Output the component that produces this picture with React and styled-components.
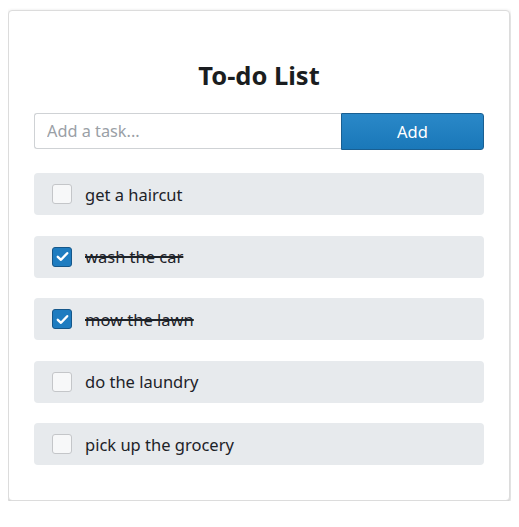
import React, { useState } from "react";
import styled, { createGlobalStyle } from "styled-components";

const Global = createGlobalStyle`
  body {
    margin: 8px;
    background: #fff;
    font-family: "Segoe UI", "Noto Sans", "Open Sans", sans-serif;
    color: #1d2125;
  }
  * { box-sizing: border-box; }
`;

const Card = styled.div`
  width: 502px;
  margin-top: 2px;
  border: 1px solid #dcdcdc;
  border-radius: 4px;
  box-shadow: 0 2px 4px rgba(0, 0, 0, 0.28);
  padding: 47px 25px 35px;
  background: #fff;
`;

const Title = styled.h1`
  margin: 0 0 21px;
  text-align: center;
  font-size: 25.5px;
  line-height: 34px;
  font-weight: 700;
  color: #1a1d20;
`;

const Form = styled.form`
  display: flex;
  height: 37px;
  margin-bottom: 23px;
`;

const Input = styled.input`
  flex: 1;
  min-width: 0;
  height: 36px;
  border: 1px solid #cfd2d5;
  border-right: none;
  border-radius: 3px 0 0 3px;
  padding: 0 12px;
  font: inherit;
  font-size: 16.3px;
  color: #333;
  outline: none;
  &::placeholder { color: #9aa0a6; }
`;

const AddButton = styled.button`
  width: 143px;
  height: 37px;
  border: 1px solid #195f92;
  border-radius: 0 3px 3px 0;
  background: linear-gradient(#2a88c8, #1a78b9);
  color: #fff;
  font: inherit;
  font-size: 16.5px;
  cursor: pointer;
`;

const List = styled.ul`
  list-style: none;
  margin: 0;
  padding: 0;
  display: flex;
  flex-direction: column;
  gap: 20.5px;
`;

const Item = styled.li`
  display: flex;
  align-items: center;
  gap: 13px;
  height: 42px;
  padding: 0 18px;
  background: #e7eaed;
  border-radius: 4px;
`;

const Box = styled.span`
  width: 20px;
  height: 20px;
  flex: none;
  border-radius: 3px;
  display: flex;
  align-items: center;
  justify-content: center;
  border: 1px solid ${p => (p.$checked ? "#15578a" : "#c4c6c9")};
  background: ${p => (p.$checked ? "#1e7cc0" : "#f7f8f9")};
  cursor: pointer;
`;

const Label = styled.span`
  font-size: 16.5px;
  color: #1d2228;
  text-decoration: ${p => (p.$done ? "line-through" : "none")};
  text-decoration-thickness: 1.5px;
`;

const initial = [
  { text: "get a haircut", done: false },
  { text: "wash the car", done: true },
  { text: "mow the lawn", done: true },
  { text: "do the laundry", done: false },
  { text: "pick up the grocery", done: false },
];

export default function App() {
  const [items, setItems] = useState(initial);
  const toggle = i =>
    setItems(items.map((it, j) => (j === i ? { ...it, done: !it.done } : it)));
  return (
    <>
      <Global />
      <Card>
        <Title>To-do List</Title>
        <Form onSubmit={e => e.preventDefault()}>
          <Input placeholder="Add a task..." />
          <AddButton type="submit">Add</AddButton>
        </Form>
        <List>
          {items.map((it, i) => (
            <Item key={i}>
              <Box $checked={it.done} onClick={() => toggle(i)}>
                {it.done && (
                  <svg width="13" height="11" viewBox="0 0 13 11">
                    <path d="M1.8 5.8 L5 8.8 L11.2 2.2" fill="none" stroke="#fff" strokeWidth="2.4" strokeLinecap="round" strokeLinejoin="round" />
                  </svg>
                )}
              </Box>
              <Label $done={it.done}>{it.text}</Label>
            </Item>
          ))}
        </List>
      </Card>
    </>
  );
}
